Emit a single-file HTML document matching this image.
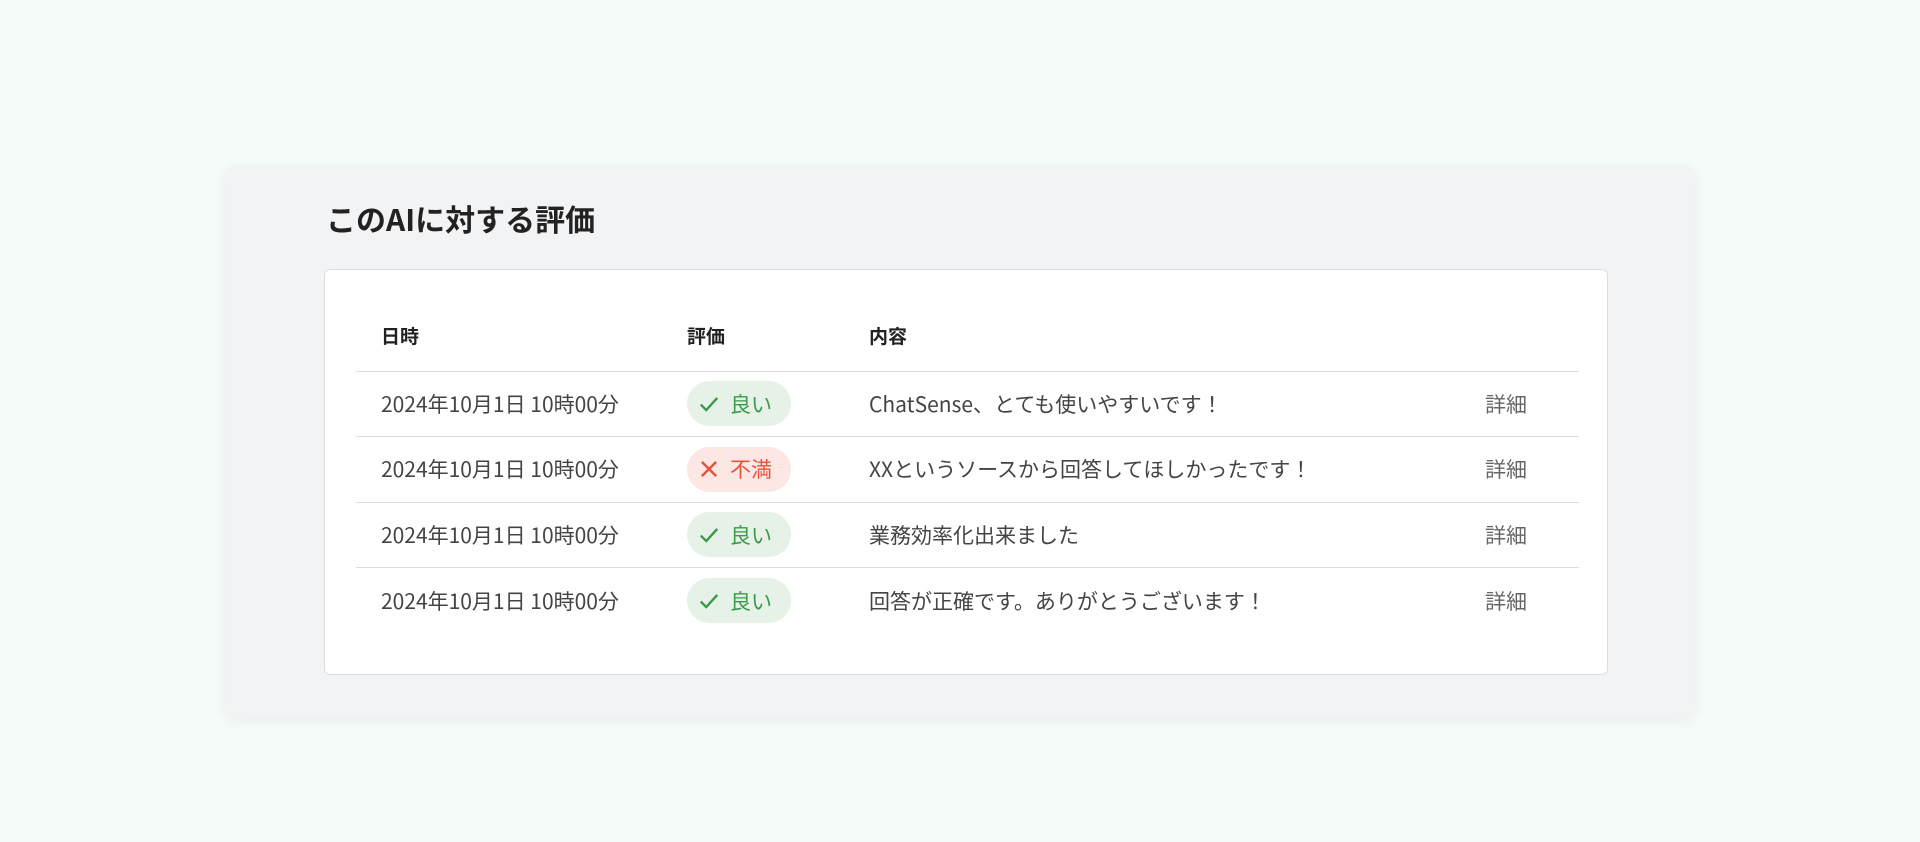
<!DOCTYPE html>
<html><head><meta charset="utf-8"><style>
*{margin:0;padding:0;box-sizing:border-box}
body{width:1920px;height:842px;background:#f5fbf9;font-family:"Noto Sans CJK JP","Liberation Sans",sans-serif;color:#333;position:relative;overflow:hidden}
.panel{position:absolute;left:225px;top:167px;width:1470px;height:551px;background:#f2f3f5;border-radius:8px;box-shadow:0 2px 14px rgba(0,0,0,.06)}
h1{position:absolute;left:326px;top:196px;font-size:30px;font-weight:bold;color:#222;line-height:44px}
.card{position:absolute;left:324px;top:269px;width:1284px;height:406px;background:#fff;border:1px solid #dcdde0;border-radius:6px}
table{position:absolute;left:31px;top:46px;width:1223px;border-collapse:collapse}
th{font-size:19px;font-weight:bold;text-align:left;height:55px;padding-bottom:15px;border-bottom:1px solid #dcdde0;color:#222;line-height:24px}
td{font-size:21px;height:65.5px;border-bottom:1px solid #dcdde0;color:#444;line-height:28px}
tr:last-child td{border-bottom:none}
.c1{padding-left:25px;width:331px}.c2{width:182px}.c4{width:104px;color:#666;padding-left:10px}
.pill{display:inline-flex;align-items:center;gap:10px;width:104px;height:45px;border-radius:23px;padding-left:11px;font-size:21px}
.g{background:#e6f2e8;color:#3a9a4a}.r{background:#fde7e4;color:#e5533d}
</style></head><body>
<div class="panel"></div>
<h1>このAIに対する評価</h1>
<div class="card"><table>
<tr><th class="c1">日時</th><th class="c2">評価</th><th>内容</th><th class="c4"></th></tr>
<tr><td class="c1">2024年10月1日 10時00分</td><td><span class="pill g"><svg width="22" height="22" viewBox="0 0 20 20"><path d="M2.5 10.5l5 5 10-11" fill="none" stroke="#3a9a4a" stroke-width="2.2"/></svg>良い</span></td><td>ChatSense、とても使いやすいです！</td><td class="c4">詳細</td></tr>
<tr><td class="c1">2024年10月1日 10時00分</td><td><span class="pill r"><svg width="22" height="22" viewBox="0 0 20 20"><path d="M3.5 3.5l13 13M16.5 3.5l-13 13" fill="none" stroke="#e5533d" stroke-width="2.2"/></svg>不満</span></td><td>XXというソースから回答してほしかったです！</td><td class="c4">詳細</td></tr>
<tr><td class="c1">2024年10月1日 10時00分</td><td><span class="pill g"><svg width="22" height="22" viewBox="0 0 20 20"><path d="M2.5 10.5l5 5 10-11" fill="none" stroke="#3a9a4a" stroke-width="2.2"/></svg>良い</span></td><td>業務効率化出来ました</td><td class="c4">詳細</td></tr>
<tr><td class="c1">2024年10月1日 10時00分</td><td><span class="pill g"><svg width="22" height="22" viewBox="0 0 20 20"><path d="M2.5 10.5l5 5 10-11" fill="none" stroke="#3a9a4a" stroke-width="2.2"/></svg>良い</span></td><td>回答が正確です。ありがとうございます！</td><td class="c4">詳細</td></tr>
</table></div>
</body></html>
